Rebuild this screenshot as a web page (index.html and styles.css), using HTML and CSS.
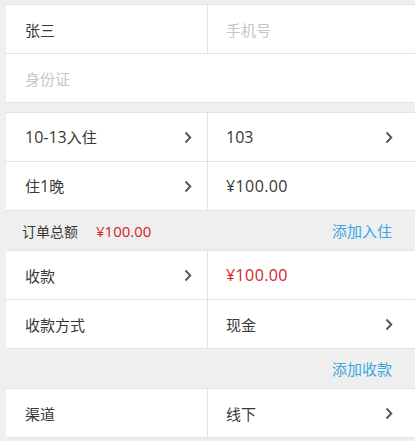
FILE: index.html
```html
<!DOCTYPE html>
<html lang="zh-CN">
<head>
<meta charset="utf-8">
<link rel="stylesheet" href="styles.css">
</head>
<body>
<div class="page">
  <section class="group">
    <div class="row split">
      <div class="cell">张三</div>
      <div class="cell placeholder">手机号</div>
    </div>
    <div class="row">
      <div class="cell placeholder">身份证</div>
    </div>
  </section>

  <section class="group gap">
    <div class="row split">
      <div class="cell nav"><span><span class="num">10-13</span>入住</span><svg class="chev" viewBox="0 0 8 13"><path d="M1.5 1.5 L6.3 6.5 L1.5 11.5"/></svg></div>
      <div class="cell nav right"><span class="num">103</span><svg class="chev" viewBox="0 0 8 13"><path d="M1.5 1.5 L6.3 6.5 L1.5 11.5"/></svg></div>
    </div>
    <div class="row split">
      <div class="cell nav"><span>住<span class="num">1</span>晚</span><svg class="chev" viewBox="0 0 8 13"><path d="M1.5 1.5 L6.3 6.5 L1.5 11.5"/></svg></div>
      <div class="cell"><span class="num price-num">¥100.00</span></div>
    </div>
  </section>

  <div class="band">
    <div class="total"><span class="label">订单总额</span><span class="price">¥100.00</span></div>
    <span class="link">添加入住</span>
  </div>

  <section class="group">
    <div class="row split">
      <div class="cell nav"><span>收款</span><svg class="chev" viewBox="0 0 8 13"><path d="M1.5 1.5 L6.3 6.5 L1.5 11.5"/></svg></div>
      <div class="cell price-cell"><span class="num price-num">¥100.00</span></div>
    </div>
    <div class="row split">
      <div class="cell">收款方式</div>
      <div class="cell nav right"><span>现金</span><svg class="chev" viewBox="0 0 8 13"><path d="M1.5 1.5 L6.3 6.5 L1.5 11.5"/></svg></div>
    </div>
  </section>

  <div class="band end">
    <span class="link">添加收款</span>
  </div>

  <section class="group">
    <div class="row split">
      <div class="cell">渠道</div>
      <div class="cell nav right"><span>线下</span><svg class="chev" viewBox="0 0 8 13"><path d="M1.5 1.5 L6.3 6.5 L1.5 11.5"/></svg></div>
    </div>
  </section>
</div>
</body>
</html>
```

FILE: styles.css
```css
html, body {
  margin: 0;
  padding: 0;
  background: #efefef;
}
body {
  font-family: "Noto Sans CJK SC", sans-serif;
  color: #383838;
  font-size: 15px;
}
.num {
  font-family: "Open Sans", "Noto Sans CJK SC", sans-serif;
  font-size: 16px;
}
.price-num {
  letter-spacing: 0.4px;
}
.page {
  padding: 4px 0 0 6px;
}
.group {
  background: #ffffff;
  border-top: 1px solid #e3e3e3;
}
.group.gap {
  margin-top: 9px;
}
.row {
  height: 48px;
  border-bottom: 1px solid #e3e3e3;
  display: grid;
  grid-template-columns: 1fr;
}
.row.split {
  grid-template-columns: 202px 1fr;
}
.cell {
  display: flex;
  align-items: center;
  padding-left: 19px;
  padding-right: 15px;
  min-width: 0;
}
.row.split .cell:first-child {
  border-right: 1px solid #e3e3e3;
}
.row.split .cell + .cell {
  padding-left: 18px;
}
.cell.right {
  padding-right: 22px;
}
.nav {
  justify-content: space-between;
}
.placeholder {
  color: #c6c6c6;
}
.price-cell {
  color: #d9202d;
}
.chev {
  width: 8px;
  height: 13px;
  fill: none;
  stroke: #555555;
  stroke-width: 1.9;
}
.band {
  height: 39px;
  display: flex;
  align-items: center;
  justify-content: space-between;
  padding: 0 23px 0 16px;
}
.band.end {
  justify-content: flex-end;
}
.total {
  display: flex;
  align-items: center;
  font-size: 14px;
}
.total .label {
  color: #383838;
}
.total .price {
  color: #d9202d;
  margin-left: 18px;
  font-family: "Open Sans", sans-serif;
  font-size: 15px;
}
.link {
  color: #3aa7df;
  font-size: 15px;
}
```
